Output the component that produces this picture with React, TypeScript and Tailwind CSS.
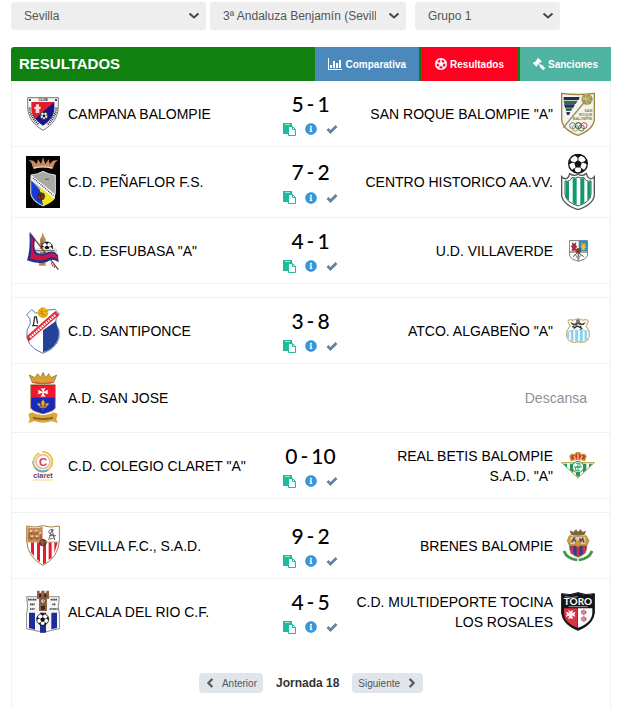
import type { ReactNode } from "react";
import { FaChevronLeft, FaChevronRight, FaGavel, FaInfoCircle, FaRegFutbol } from "react-icons/fa";

function Crest({ w, h, size, children }: { w: number; h: number; size: string; children: ReactNode }) {
  return (
    <span className="flex w-[34px] shrink-0 justify-center">
      <svg viewBox={`0 0 ${w} ${h}`} className={size} aria-hidden="true">
        {children}
      </svg>
    </span>
  );
}

function Ball({ x, y, r }: { x: number; y: number; r: number }) {
  return (
    <g transform={`translate(${x} ${y}) scale(${r / 10})`}>
      <circle r="10" fill="#fff" stroke="#111" strokeWidth="1.4" />
      <path d="M0-4 4-1 2.5 4h-5L-4-1Z" fill="#111" />
      <path d="M-4-9Q0-11 4-9L0-6ZM9-5 10 1 6-1ZM-9-5-10 1-6-1ZM7 7 2 10 4 5ZM-7 7-2 10-4 5Z" fill="#111" />
      <path d="M0-4V-7M4-1 7-2M2.5 4 5 7M-2.5 4-5 7M-4-1-7-2" stroke="#111" />
    </g>
  );
}

function Campana() {
  return (
    <Crest w={96} h={102} size="h-[34px] w-8">
      <path d="M2 2H94V22C96 60 76 84 48 100 20 84 0 60 2 22Z" fill="#f4f4f4" stroke="#777" strokeWidth="3" />
      <path d="M14 15H82V30C83 56 70 71 48 86 26 71 13 56 14 30Z" fill="#16168c" />
      <path d="M14 15H82L24 66Q12 48 14 30Z" fill="#e21b2d" />
      <path d="M27 22h9v7h5v7h-4v12H26V36h-4v-7h5Z" fill="#ffd9d4" />
      <Ball x={51} y={56} r={11} />
      <text x="48" y="11" textAnchor="middle" fontSize="10" fontWeight="700" fill="#222">CLUB</text>
      <path d="M8 32Q10 60 36 84M88 32Q86 60 60 84" fill="none" stroke="#333" strokeWidth="7" strokeDasharray="3 3" />
      <circle cx="9" cy="9" r="3" fill="#111" />
      <circle cx="87" cy="9" r="3" fill="#111" />
    </Crest>
  );
}

function Penaflor() {
  return (
    <Crest w={102} h={156} size="h-[52px] w-[34px]">
      <path d="M0 0H102V156H0Z" fill="#050505" />
      <path d="M22 38 16 20 8 12l14 2 10 10 4-14 9 14 6-20 7 20 10-14 3 14 10-10 14-2-8 8-7 18Q51 30 22 38Z" fill="#c98a63" />
      <path d="M24 36Q51 29 78 36" stroke="#f3d0b2" strokeWidth="4" fill="none" />
      <path d="M15 57Q34 56 51 46 68 56 88 57V112Q84 136 51 150 18 136 14 112Z" fill="#a9a9a9" stroke="#ddd" strokeWidth="3" />
      <path d="M16 74V112Q20 134 51 148V112Z" fill="#173bd8" />
      <path d="M40 94 86 128Q76 142 51 148Z" fill="#f2e51b" />
      <path d="M17 58 86 114V130L16 72Z" fill="#fff" />
      <path d="M21 66 84 120" stroke="#333" strokeWidth="4" strokeDasharray="3 3" />
      <circle cx="63" cy="70" r="10" fill="none" stroke="#c3b45c" strokeWidth="3" strokeDasharray="4 2" />
      <path d="M57 70h12" stroke="#3675cf" strokeWidth="4" />
      <circle cx="45" cy="121" r="11" fill="#713d2b" stroke="#2a1715" strokeWidth="2" />
      <path d="M36 117q9 5 18-2M43 111q-3 9 4 20" stroke="#2a1715" strokeWidth="2" fill="none" />
    </Crest>
  );
}

function Esfubasa() {
  return (
    <Crest w={102} h={120} size="h-10 w-[34px]">
      <path d="M42 42V24l5-8 3-12 4 12 5 8v80H39Z" fill="#b98d59" />
      <path d="M41 38h18M41 60h18M48 26v74" stroke="#765535" strokeWidth="2" />
      <Ball x={63} y={50} r={17} />
      <path d="M24 54h67v9H24Z" fill="#fff" stroke="#666" />
      <path d="M28 59h60" stroke="#333" strokeWidth="4" strokeDasharray="4 2" />
      <path d="M11 5 97 116" stroke="#7a4b36" strokeWidth="4" />
      <path d="M10 8Q20 12 27 26 22 50 30 63 47 74 66 64 83 57 96 72L98 94Q80 80 64 92 36 101 3 88 14 55 10 8Z" fill="#293082" />
      <path d="M14 16Q20 20 22 29 17 55 25 68 46 79 68 68 84 62 95 76L96 86Q80 72 62 83 38 94 12 82 19 58 14 16Z" fill="#c91548" />
      <path d="m75 94 6 13M83 96l3 15" stroke="#a44" strokeWidth="3" />
    </Crest>
  );
}

function Santiponce() {
  return (
    <Crest w={102} h={141} size="h-[47px] w-[34px]">
      <path d="M2 23 17 8Q27 22 42 18L56 10 87 7 100 21Q87 33 89 49 94 60 99 70 107 118 51 139-5 118 3 70L13 49Q15 34 2 23Z" fill="#fff" stroke="#5878a8" strokeWidth="3" />
      <path d="M51 70 90 42q1 15 8 29 4 47-47 65Z" fill="#234398" />
      <path d="M2 88 88 12 99 24 7 104Z" fill="#e22b36" />
      <path d="M12 91 88 24" stroke="#fff" strokeWidth="7" strokeDasharray="5 3" />
      <circle cx="51" cy="17" r="16" fill="#f0b51d" />
      <path d="M38 10q12 9 27 1M37 20q13-4 26 6M48 2q-5 15 5 29" fill="none" stroke="#b87800" strokeWidth="2" />
      <path d="M22 56 26 30h5l4 20M18 56h18" stroke="#333" strokeWidth="4" fill="none" />
    </Crest>
  );
}

function SanJose() {
  return (
    <Crest w={90} h={156} size="h-[52px] w-[30px]">
      <path d="M13 32 4 9l17 8L29 5l9 12 7-16 8 16 9-12 7 12 17-8-9 23Q45 40 13 32Z" fill="#d3a434" stroke="#8b651f" strokeWidth="2" />
      <path d="M15 31q30 7 60 0" stroke="#e44843" strokeWidth="3" fill="none" />
      <path d="M8 38H82V108Q78 118 45 126 12 118 8 108Z" fill="#1828bd" stroke="#bc9638" strokeWidth="2" />
      <path d="M9 40H81V77H9Z" fill="#ee1830" />
      <path d="m45 61-7-14 7 3 7-3-5 12 14-6-3 7 3 7-14-5 5 14-7-3-7 3 6-14-15 5 3-7-3-7 14 6" fill="#fff" />
      <path d="M45 83q10 9 1 20h7q-2-12 8-9 3 8-9 9l3 4H35l3-4q-12-1-9-9 10-3 8 9h7q-9-11 1-20m0 22v12" fill="#e4b43a" stroke="#9e7521" strokeWidth="2" />
      <path d="M1 126 12 121q33 17 66 0l11 5-4 16 4 12-18-7q-26 11-52 0L1 154l4-12Z" fill="#d7a63e" />
      <path d="M16 137q29 8 58 0" stroke="#67441b" strokeWidth="6" strokeDasharray="4 2" fill="none" />
    </Crest>
  );
}

function Claret() {
  return (
    <Crest w={66} h={90} size="h-[30px] w-[22px]">
      <g fill="none" strokeWidth="5">
        <path d="M31 2a30 30 0 1 1-18 54" stroke="#efba2c" />
        <path d="M3 30A30 30 0 0 0 48 57" stroke="#44acd5" />
        <path d="M9 48A30 30 0 0 1 22 6" stroke="#edc548" />
        <circle cx="33" cy="32" r="21" stroke="#e9b8a0" />
      </g>
      <text x="33" y="44" textAnchor="middle" fontSize="34" fontWeight="700" fill="#d73b55">C</text>
      <text x="33" y="81" textAnchor="middle" fontSize="22" fontWeight="700" fill="#753a50">claret</text>
      <path d="M4 87h59" stroke="#eac35f" strokeWidth="3" strokeDasharray="5 2" />
    </Crest>
  );
}

function Sevilla() {
  return (
    <Crest w={102} h={123} size="h-[41px] w-[34px]">
      <path d="M2 3Q29 10 51 2 73 10 100 3V49Q96 98 51 121 6 98 2 49Z" fill="#fff" stroke="#a48045" strokeWidth="3" />
      <path d="M15 52h9v42l-9-12ZM33 52h9v60l-9-9ZM51 52h9v61l-9 5ZM68 52h9v46l-9 7ZM85 52h10L85 85Z" fill="#e51b31" />
      <path d="M4 6Q29 12 50 5V51H4Z" fill="#c68b57" />
      <path d="M9 43V27l8-10 8 13 8-13 12 13v13M17 20v25M33 18v28M10 39h36" fill="none" stroke="#8f5132" strokeWidth="3" />
      <path d="M12 18h7M28 17h7M39 23h6M15 34h6M30 34h6" stroke="#f0ce9a" strokeWidth="6" />
      <path d="M52 5Q74 12 97 6V51H52Z" fill="#fff" />
      <path d="m68 45 10-32 8 32M70 32h20M84 16q-12-7-16 4 0 8 13 10 7 11-9 12" fill="none" stroke="#666" strokeWidth="3" />
      <path d="M4 51H98" stroke="#c8a46c" strokeWidth="3" />
      <circle cx="51" cy="53" r="10" fill="#704127" stroke="#3f2822" strokeWidth="2" />
      <path d="M43 49q9 6 16 1M48 44q-3 8 4 18" fill="none" stroke="#b8794c" strokeWidth="2" />
    </Crest>
  );
}

function Alcala() {
  return (
    <Crest w={102} h={129} size="h-[43px] w-[34px]">
      <path d="M2 20H100L97 52 101 76V116L51 127 1 116V76L5 52Z" fill="#f5f5f5" stroke="#555" strokeWidth="2" />
      <path d="M9 68H27V119L9 114ZM42 68H60V128H42ZM76 68H93V114L76 118Z" fill="#1d2c98" />
      <path d="M33 2h8v6h5V2h10v6h5V2h8v25h-6v36H39V27h-6Z" fill="#96613e" />
      <path d="M39 12h7v10h-7ZM54 12h7v10h-7ZM45 47h12v12H45Z" fill="#342a27" />
      <circle cx="51" cy="33" r="7" fill="#f4efe3" stroke="#222" strokeWidth="2" />
      <path d="M51 28v6h4" stroke="#222" strokeWidth="2" fill="none" />
      <Ball x={50} y={88} r={18} />
      <path d="M6 29h26M12 43h14M12 57h14M74 29h20M79 43h10M71 57h26" stroke="#444" strokeWidth="5" strokeDasharray="4 1" />
    </Crest>
  );
}

function SanRoque() {
  return (
    <Crest w={102} h={132} size="h-11 w-[34px]">
      <path d="M2 4Q51 11 100 4V82Q98 112 51 130 4 112 2 82Z" fill="#f4f4ee" stroke="#9d873f" strokeWidth="4" />
      <path d="M8 15H56L53 24H8ZM9 37h33l-5 10H12Z" fill="#302559" />
      <path d="M8 26H50L44 36H10ZM13 49h22l-5 8H16Z" fill="#216e52" />
      <path d="M16 60h12l-4 9h-6Z" fill="#302559" />
      <circle cx="78" cy="22" r="17" fill="#a29652" />
      <path d="M65 16q13 9 25-5M63 23q12-7 29 6M75 6q-6 17 6 33" stroke="#d2c98c" strokeWidth="3" fill="none" />
      <path d="M7 107 68 33" stroke="#998a48" strokeWidth="4" />
      <g fontSize="11" fontWeight="700" fill="#8b7c45" textAnchor="end"><text x="94" y="61">SAN</text><text x="94" y="72">ROQUE</text><text x="94" y="84">BALOMPIE</text></g>
      <g fill="none" strokeWidth="3"><circle cx="35" cy="101" r="9" stroke="#3f89af" /><circle cx="52" cy="101" r="9" stroke="#333" /><circle cx="69" cy="101" r="9" stroke="#cc4757" /><circle cx="43" cy="108" r="9" stroke="#c29c3c" /><circle cx="61" cy="108" r="9" stroke="#398868" /></g>
    </Crest>
  );
}

function Historico() {
  return (
    <Crest w={102} h={168} size="h-14 w-[34px]">
      <Ball x={51} y={29} r={28} />
      <path d="M2 68Q9 77 18 73 24 70 26 59 40 69 51 60 62 69 76 59 80 72 87 74 94 76 100 68V122Q99 150 51 167 3 150 2 122Z" fill="#fff" stroke="#4c5551" strokeWidth="4" />
      <path d="M12 81Q28 84 33 70 43 75 51 69 59 75 69 70 74 84 90 81V120Q90 143 51 156 12 143 12 120Z" fill="#fff" stroke="#44584f" strokeWidth="3" />
      <path d="M14 82h10v59l-10-12ZM35 73h12v80l-12-6ZM58 73h12v74l-12 6ZM79 82h10v46l-10 12Z" fill="#119969" />
    </Crest>
  );
}

function Villaverde() {
  return (
    <Crest w={57} h={66} size="h-[22px] w-[19px]">
      <path d="M1 2H56V48Q51 58 28 64 6 58 1 48Z" fill="#fff" stroke="#777" strokeWidth="3" />
      <path d="M29 2H56V33H29Z" fill="#348bbd" />
      <path d="m8 7 8 4 6-5-1 9 4 6-5 4 3 7H7l3-8-5-5 5-4Z" fill="#a42c43" />
      <path d="m37 8 7 4 6-4-2 8 4 7-6 2 3 5H37l3-6-6-3 4-4Z" fill="#e2bd35" />
      <path d="M2 36H55M12 50l15-13 17 13M28 39v23" stroke="#484d4f" strokeWidth="3" fill="none" />
      <path d="M18 44q10 5 19 0l-9 19Z" fill="#969b9a" />
      <circle cx="28" cy="32" r="8" fill="#80442c" />
    </Crest>
  );
}

function Algabeno() {
  return (
    <Crest w={72} h={75} size="h-[25px] w-6">
      <path d="M6 10Q10 1 20 7 36-2 52 7 62 1 67 10L61 25 67 36Q77 50 64 66 50 78 36 70 22 78 8 66-5 50 5 36L12 24Z" fill="#fffdf5" stroke="#ccb881" strokeWidth="4" />
      <path d="M5 42Q17 32 36 36 55 32 67 42 73 55 61 66 48 74 36 69 20 74 9 65-1 53 5 42Z" fill="#8fd2ee" />
      <path d="M12 41v26M25 37v34M39 37v32M53 38v31M65 42v18" stroke="#fff" strokeWidth="5" />
      <path d="m13 13 13 4 10-7 11 7 13-5-7 9-12 1-5-5-5 6-13-3Z" fill="#484848" />
      <circle cx="36" cy="9" r="6" fill="#767676" />
      <path d="m23 31 11-7 15 8M44 24v11M19 28l6-5" stroke="#222" strokeWidth="4" fill="none" />
    </Crest>
  );
}

function Betis() {
  return (
    <Crest w={102} h={81} size="h-[27px] w-[34px]">
      <path d="M2 32H100L51 78Z" fill="#fff" stroke="#b59a43" strokeWidth="3" />
      <path d="M8 35h10v12ZM27 35h10v28l-10-9ZM45 35h12v35l-6 5-6-5ZM66 35h10v18l-10 10ZM84 35h10L84 47Z" fill="#209652" />
      <circle cx="51" cy="45" r="17" fill="#fff" stroke="#209652" strokeWidth="3" />
      <path d="M44 34h13v11H44v11h13M51 32v27M38 45h25" stroke="#39a267" strokeWidth="3" fill="none" />
      <path d="M31 25 27 13Q31 4 42 9 43 2 51 1 59 2 60 9 71 4 75 13L71 25Q51 19 31 25Z" fill="#ce3540" stroke="#c1963a" strokeWidth="4" />
      <path d="M51 4v17M39 12l5 10M64 12l-6 10" stroke="#efcb57" strokeWidth="4" />
    </Crest>
  );
}

function Brenes() {
  return (
    <Crest w={90} h={99} size="h-[33px] w-[30px]">
      <path d="M24 17 20 4l11 5L39 1l6 7 8-7 6 8 10-4-4 12Q45 23 24 17Z" fill="#806339" />
      <path d="M19 20Q45 25 70 20L78 35 71 52Q74 77 45 85 17 77 20 52L13 35Z" fill="#d49a35" stroke="#99753d" strokeWidth="2" />
      <path d="M23 24H67V45H23Z" fill="#d9cfb2" />
      <path d="m26 40 6-11 7 10M51 28v12l8-11 4 12M31 27h6" fill="none" stroke="#645349" strokeWidth="5" />
      <path d="M20 50H71Q71 74 45 83 20 75 20 50Z" fill="#343c93" />
      <path d="M27 51v24M45 51v30M63 51v22" stroke="#c9354a" strokeWidth="8" />
      <circle cx="45" cy="44" r="9" fill="#d79832" stroke="#99682b" />
      <path d="M3 66Q11 89 43 93M87 66Q79 89 47 93" fill="none" stroke="#3e934b" strokeWidth="8" />
    </Crest>
  );
}

function Toro() {
  return (
    <Crest w={102} h={117} size="h-[39px] w-[34px]">
      <path d="M2 5Q27 12 51 2 75 12 100 5V63Q96 98 51 115 6 98 2 63Z" fill="#151515" stroke="#111" strokeWidth="3" />
      <path d="M9 49H50V107Q8 92 9 62Z" fill="#dc3142" />
      <path d="M51 49H94V62Q93 92 51 107Z" fill="#fff" />
      <text x="51" y="40" textAnchor="middle" fontSize="30" fontWeight="700" fill="#fff" fontFamily="Lato, sans-serif">TORO</text>
      <path d="M23 44h57M12 14q20 5 38 0" stroke="#ddd" strokeWidth="2" fill="none" />
      <path d="m29 67-6-11 6 3 6-3-4 9 11-4-3 6 3 6-11-4 4 11-6-3-6 3 4-11-11 4 3-6-3-6 11 4" fill="#fff" stroke="#fff" strokeWidth="2" />
      <g fill="#e8a0a8" stroke="#c65362" strokeWidth="5" strokeDasharray="4 2"><circle cx="68" cy="61" r="6" /><circle cx="68" cy="81" r="6" /></g>
    </Crest>
  );
}

function PasteIcon() {
  return (
    <svg viewBox="0 0 13 13" className="h-[13px] w-[13px]" aria-hidden="true">
      <path d="M0 0H9V4H5V11H0Z" fill="#20ba9c" />
      <path d="M2 1h5v1H2Z" fill="#a5e3d7" />
      <path d="M5.5 3.5h4l3 3v6h-7ZM9.5 3.5v3h3" fill="#fff" stroke="#20ba9c" />
    </svg>
  );
}

function CheckIcon() {
  return (
    <svg viewBox="0 0 12 10" className="h-2.5 w-3" aria-hidden="true">
      <path d="m1.5 5 3 3 6-6" fill="none" stroke="currentColor" strokeWidth="2.8" />
    </svg>
  );
}

function ChartIcon() {
  return (
    <svg viewBox="0 0 14 12" className="h-3 w-3.5" fill="currentColor" aria-hidden="true">
      <path d="M0 0h1v11h13v1H0ZM2 7h2v3H2ZM5 3h2v7H5ZM8 5h2v5H8ZM11 2h2v8h-2Z" />
    </svg>
  );
}

type Match = {
  home: string;
  away?: string;
  goals?: [number, number];
  homeCrest: ReactNode;
  awayCrest?: ReactNode;
};

const groups: Match[][] = [
  [
    { home: "CAMPANA BALOMPIE", away: 'SAN ROQUE BALOMPIE "A"', goals: [5, 1], homeCrest: <Campana />, awayCrest: <SanRoque /> },
    { home: "C.D. PEÑAFLOR F.S.", away: "CENTRO HISTORICO AA.VV.", goals: [7, 2], homeCrest: <Penaflor />, awayCrest: <Historico /> },
    { home: 'C.D. ESFUBASA "A"', away: "U.D. VILLAVERDE", goals: [4, 1], homeCrest: <Esfubasa />, awayCrest: <Villaverde /> },
  ],
  [
    { home: "C.D. SANTIPONCE", away: 'ATCO. ALGABEÑO "A"', goals: [3, 8], homeCrest: <Santiponce />, awayCrest: <Algabeno /> },
    { home: "A.D. SAN JOSE", homeCrest: <SanJose /> },
    { home: 'C.D. COLEGIO CLARET "A"', away: 'REAL BETIS BALOMPIE S.A.D.\u00a0"A"', goals: [0, 10], homeCrest: <Claret />, awayCrest: <Betis /> },
  ],
  [
    { home: "SEVILLA F.C., S.A.D.", away: "BRENES BALOMPIE", goals: [9, 2], homeCrest: <Sevilla />, awayCrest: <Brenes /> },
    { home: "ALCALA DEL RIO C.F.", away: "C.D. MULTIDEPORTE TOCINA LOS\u00a0ROSALES", goals: [4, 5], homeCrest: <Alcala />, awayCrest: <Toro /> },
  ],
];

function MatchRow({ match }: { match: Match }) {
  return (
    <li className="grid grid-cols-[1fr_56px_1fr] items-center border-b border-[#eef1f5] py-[7px] pr-[15px] pl-3.5">
      <div className="flex items-center gap-2">
        {match.homeCrest}
        <span>{match.home}</span>
      </div>
      {match.goals ? (
        <div className="flex h-[51px] flex-col items-center">
          <div className="flex h-8 items-center gap-[3px] font-[Lato] text-[21px] font-medium">
            <span>{match.goals[0]}</span>
            <span>-</span>
            <span>{match.goals[1]}</span>
          </div>
          <div className="flex h-5 items-center gap-[9px] text-xs">
            <button aria-label="Acta"><PasteIcon /></button>
            <button aria-label="Información" className="text-[#3598db]"><FaInfoCircle /></button>
            <button aria-label="Validado" className="text-[#6780a3]"><CheckIcon /></button>
          </div>
        </div>
      ) : (
        <div className="h-[54px]" />
      )}
      {match.away ? (
        <div className="flex items-center justify-end gap-2 text-right">
          <span>{match.away}</span>
          {match.awayCrest}
        </div>
      ) : (
        <span className="pr-2 text-right text-[#8b9199]">Descansa</span>
      )}
    </li>
  );
}

function Picker({ label, value }: { label: string; value: string }) {
  return (
    <div className="grid items-center">
      <select
        aria-label={label}
        defaultValue={value}
        className="col-start-1 row-start-1 h-7 w-full appearance-none rounded-[3px] bg-[#eee] pr-[30px] pl-[13px] text-xs text-[#555]"
      >
        <option>{value}</option>
      </select>
      <svg viewBox="0 0 12 8" className="pointer-events-none col-start-1 row-start-1 mr-1.5 h-2 w-3 justify-self-end" aria-hidden="true">
        <path d="m1.5 1.5 4.5 4 4.5-4" fill="none" stroke="#444" strokeWidth="2" />
      </svg>
    </div>
  );
}

export default function App() {
  return (
    <main className="bg-white pr-[7px] pl-[11px] font-['Liberation_Sans',Arial,sans-serif] text-black">
      <form className="grid grid-cols-[195fr_196fr_150fr] gap-1 pt-0.5 pr-[51px]">
        <Picker label="Provincia" value="Sevilla" />
        <Picker label="Competición" value="3ª Andaluza Benjamín (Sevilla)" />
        <div className="pl-[5px]"><Picker label="Grupo" value="Grupo 1" /></div>
      </form>

      <header className="mt-[17px] flex h-[34px] items-stretch justify-between rounded-tl-[3px] bg-[#108010] text-white">
        <h1 className="self-center pl-2 text-[15px] font-bold">RESULTADOS</h1>
        <nav className="flex gap-[3px] text-[10px] font-bold">
          <a href="#comparativa" className="flex items-center gap-[3px] bg-[#4b88bb] px-[13px]"><ChartIcon />Comparativa</a>
          <a href="#resultados" className="flex items-center gap-[3px] bg-[#ff0020] px-[13px]"><FaRegFutbol className="h-3 w-3 stroke-current stroke-[24]" />Resultados</a>
          <a href="#sanciones" className="flex items-center gap-[3px] bg-[#4fb3a2] px-[13px]"><FaGavel className="h-3 w-3 -scale-x-100" />Sanciones</a>
        </nav>
      </header>

      <section className="border-x border-[#eef1f5] pb-4">
        <div className="flex flex-col text-sm leading-5">
          {groups.map((matches, index) => (
            <ul
              key={index}
              className={index > 0 ? "mt-[13px] border-t border-[#eef1f5] last:[&>li:last-child]:border-transparent" : ""}
            >
              {matches.map((match) => (
                <MatchRow key={match.home} match={match} />
              ))}
            </ul>
          ))}
        </div>

        <nav className="mt-7 flex items-center justify-center gap-[13px] text-[10px] text-[#555]">
          <button className="flex h-5 items-center gap-[7px] rounded-sm bg-[#e0e5ec] px-1.5">
            <FaChevronLeft className="stroke-current stroke-[40]" />Anterior
          </button>
          <strong className="text-xs text-[#333]">Jornada 18</strong>
          <button className="flex h-5 items-center gap-[7px] rounded-sm bg-[#e0e5ec] px-1.5">
            Siguiente<FaChevronRight className="stroke-current stroke-[40]" />
          </button>
        </nav>
      </section>
    </main>
  );
}
